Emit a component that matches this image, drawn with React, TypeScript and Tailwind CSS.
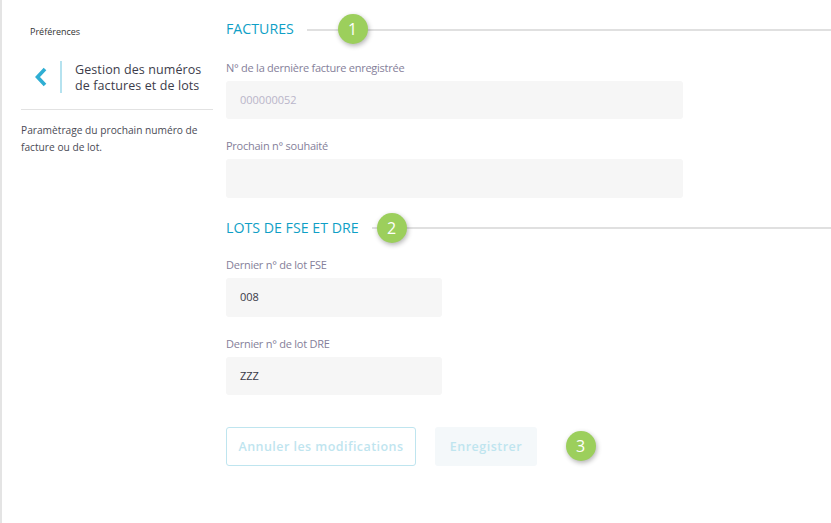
function Badge({ n, className }: { n: number; className: string }) {
  return (
    <span
      className={`absolute flex h-[30px] w-[30px] items-center justify-center rounded-full bg-[#9ccf5c] text-[16px] text-white shadow-[1px_2px_5px_rgba(0,0,0,0.3)] ${className}`}
    >
      {n}
    </span>
  );
}

function SectionTitle({ title, n, badgeLeft }: { title: string; n: number; badgeLeft: string }) {
  return (
    <div className="relative flex h-[30px] items-center">
      <h2 className="pt-[1px] text-[14.2px] leading-none text-[#0f9fc6]">{title}</h2>
      <div className="ml-[13px] mt-[2px] h-[2px] flex-1 bg-[#e0e0e0]" />
      <Badge n={n} className={badgeLeft} />
    </div>
  );
}

function Field({
  label,
  value,
  wide = false,
  disabled = false,
}: {
  label: string;
  value?: string;
  wide?: boolean;
  disabled?: boolean;
}) {
  return (
    <div>
      <label className="block h-[14px] text-[11px] leading-[14px] tracking-[-0.25px] text-[#85809a]">
        {label}
      </label>
      <div
        className={`mt-[6px] flex h-[38.6px] items-center rounded-[3px] bg-[#f6f6f6] pl-[14px] text-[11px] ${
          wide ? 'w-[457px]' : 'w-[216px]'
        } ${disabled ? 'pl-[13px] text-[#b9b5c9]' : 'text-[#3a3a48]'}`}
      >
        {value}
      </div>
    </div>
  );
}

export default function App() {
  return (
    <div className="flex h-[523px] w-[831px] overflow-hidden border-l-2 border-[#e4e4e4] bg-white font-['Open_Sans',sans-serif]">
      <aside className="w-[211px] shrink-0 pl-[19px]">
        <p className="ml-[9px] mt-[26px] text-[9px] leading-[12px] text-[#333]">Préférences</p>
        <div className="mt-[23px] flex h-[32px] items-center">
          <svg width="14" height="20" viewBox="0 0 14 20" className="ml-[13px]">
            <path d="M11 2 L3.5 10 L11 18" fill="none" stroke="#2faed3" strokeWidth="3.6" />
          </svg>
          <div className="ml-[12px] h-[32px] w-[2px] bg-[#b5e2ef]" />
          <p className="ml-[13px] whitespace-nowrap pt-[1px] text-[12.5px] leading-[16px] tracking-[0.1px] text-[#3c3c4a]">
            Gestion des numéros
            <br />
            de factures et de lots
          </p>
        </div>
        <div className="mt-[16px] h-[1px] bg-[#e2e2e2]" />
        <p className="mt-[12px] whitespace-nowrap text-[10.2px] leading-[17px] text-[#4a4a55]">
          Paramètrage du prochain numéro de
          <br />
          facture ou de lot.
        </p>
      </aside>
      <main className="ml-[13px] flex-1 pt-[13.6px]">
        <SectionTitle title="FACTURES" n={1} badgeLeft="left-[111.5px] top-0" />
        <div className="mt-[17px] flex flex-col gap-[20px]">
          <Field label="N° de la dernière facture enregistrée" value="000000052" wide disabled />
          <Field label="Prochain n° souhaité" wide />
        </div>
        <div className="mt-[14.6px]">
          <SectionTitle title="LOTS DE FSE ET DRE" n={2} badgeLeft="left-[150.5px] top-[0.6px]" />
        </div>
        <div className="mt-[15.8px] flex flex-col gap-[20px]">
          <Field label="Dernier n° de lot FSE" value="008" />
          <Field label="Dernier n° de lot DRE" value="ZZZ" />
        </div>
        <div className="relative mt-[32px] flex gap-[19px]">
          <button className="h-[38.6px] w-[190px] rounded-[3px] border border-[#bfe5ef] bg-white pt-[1px] text-[12.5px] font-semibold tracking-[0.45px] text-[#bfe5ef]">
            Annuler les modifications
          </button>
          <button className="h-[38.6px] w-[102px] rounded-[3px] bg-[#f4f8fa] pt-[1px] text-[12.5px] font-semibold tracking-[0.5px] text-[#bfe5ef]">
            Enregistrer
          </button>
          <Badge n={3} className="left-[339.5px] top-[3.3px]" />
        </div>
      </main>
    </div>
  );
}
